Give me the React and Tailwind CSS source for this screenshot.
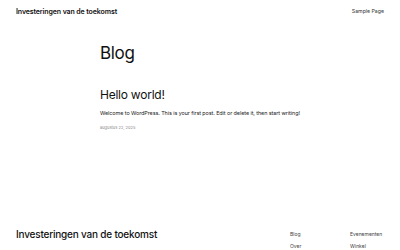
export default function App() {
  return (
    <div className="w-[400px] h-[250px] bg-white text-[#111] overflow-hidden flex flex-col" style={{ fontFamily: 'Inter, "Noto Sans", sans-serif' }}>
      {/* Header */}
      <header className="flex items-center justify-between px-4 h-[23px] pt-[1px]">
        <a className="text-[7px] font-semibold tracking-[-0.015em]">Investeringen van de toekomst</a>
        <nav className="text-[5.2px] text-[#333]">
          <a>Sample Page</a>
        </nav>
      </header>

      {/* Main */}
      <main className="w-[200px] mx-auto pt-[22px]">
        <h1 className="text-[17px] leading-none tracking-[-0.02em]">Blog</h1>
        <article className="mt-[27px]">
          <h2 className="text-[12px] leading-none tracking-[-0.02em]">Hello world!</h2>
          <p className="mt-[8px] text-[5.45px] text-[#222] tracking-[-0.015em] whitespace-nowrap">
            Welcome to WordPress. This is your first post. Edit or delete it, then start writing!
          </p>
          <p className="mt-[8px] text-[4px] text-[#888]">augustus 22, 2025</p>
        </article>
      </main>

      {/* Footer */}
      <footer className="mt-auto flex justify-between items-start px-4 h-[24px] pt-[3px]">
        <div className="text-[10px] leading-none font-medium tracking-[-0.02em]">Investeringen van de toekomst</div>
        <div className="grid grid-cols-[60px_34px] gap-y-[6px] leading-[6px] text-[5px] text-[#444] pt-[2px]">
          <a>Blog</a>
          <a>Evenementen</a>
          <a>Over</a>
          <a>Winkel</a>
        </div>
      </footer>
    </div>
  );
}
